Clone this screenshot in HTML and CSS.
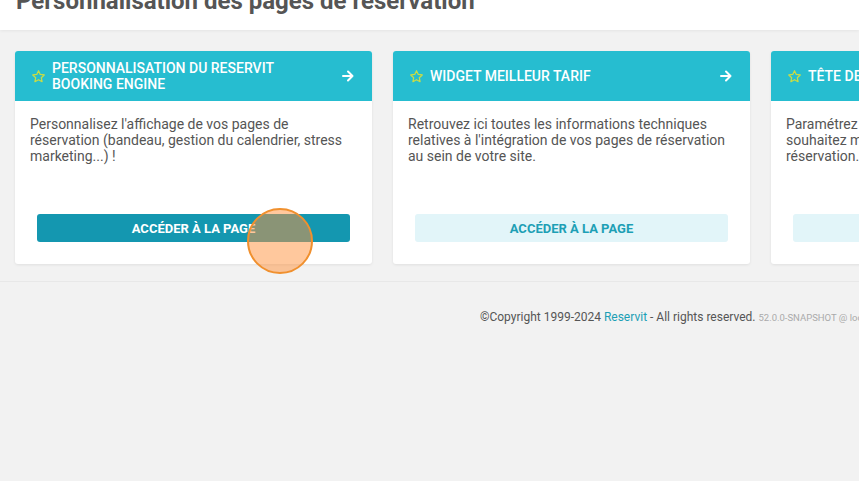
FILE: index.html
```html
<!DOCTYPE html>
<html lang="fr">
<head>
  <meta charset="UTF-8">
  <meta name="viewport" content="width=device-width, initial-scale=1.0">
  <title>Personnalisation des pages de réservation</title>
  <link rel="stylesheet" href="styles.css">
</head>
<body>

  <div class="page-header">
    <h1>Personnalisation des pages de réservation</h1>
  </div>

  <div class="cards">
    <div class="card">
      <div class="card-head">
        <svg class="star" viewBox="0 0 24 24"><path d="M12 2.8l2.8 5.9 6.4.8-4.7 4.4 1.2 6.4L12 17.2l-5.7 3.1 1.2-6.4-4.7-4.4 6.4-.8z"/></svg>
        <span class="card-title">Personnalisation du Reservit Booking Engine</span>
        <svg class="arrow" viewBox="0 0 12 12"><path d="M1 6h9.5M6 1.5L10.5 6 6 10.5"/></svg>
      </div>
      <div class="card-body">
        <p>Personnalisez l'affichage de vos pages de réservation (bandeau, gestion du calendrier, stress marketing...) !</p>
        <button class="btn btn-dark">Accéder à la page</button>
      </div>
    </div>

    <div class="card">
      <div class="card-head">
        <svg class="star" viewBox="0 0 24 24"><path d="M12 2.8l2.8 5.9 6.4.8-4.7 4.4 1.2 6.4L12 17.2l-5.7 3.1 1.2-6.4-4.7-4.4 6.4-.8z"/></svg>
        <span class="card-title">Widget meilleur tarif</span>
        <svg class="arrow" viewBox="0 0 12 12"><path d="M1 6h9.5M6 1.5L10.5 6 6 10.5"/></svg>
      </div>
      <div class="card-body">
        <p>Retrouvez ici toutes les informations techniques relatives à l'intégration de vos pages de réservation au sein de votre site.</p>
        <button class="btn btn-light">Accéder à la page</button>
      </div>
    </div>

    <div class="card">
      <div class="card-head">
        <svg class="star" viewBox="0 0 24 24"><path d="M12 2.8l2.8 5.9 6.4.8-4.7 4.4 1.2 6.4L12 17.2l-5.7 3.1 1.2-6.4-4.7-4.4 6.4-.8z"/></svg>
        <span class="card-title">Tête de page</span>
        <svg class="arrow" viewBox="0 0 12 12"><path d="M1 6h9.5M6 1.5L10.5 6 6 10.5"/></svg>
      </div>
      <div class="card-body">
        <p>Paramétrez ici toutes les informations que vous souhaitez mettre en avant en tête de vos pages de réservation.</p>
        <button class="btn btn-light">Accéder à la page</button>
      </div>
    </div>
  </div>

  <div class="footer">
    ©Copyright 1999-2024 <a href="#">Reservit</a> - All rights reserved.
    <span class="version">52.0.0-SNAPSHOT @ localhost</span>
  </div>

  <!-- click marker -->
  <div class="click-dot"></div>

</body>
</html>
```

FILE: styles.css
```css
body {
  margin: 0;
  padding: 0;
  background-color: #f2f2f2;
  font-family: Roboto, "Liberation Sans", Arial, sans-serif;
  color: #555;
  height: 100vh;
  overflow: hidden;
  position: relative;
}

.page-header {
  background: #fff;
  margin-top: -23px;
  padding: 10px 16px 15px;
  box-shadow: 0 1px 3px rgba(0, 0, 0, 0.06);
}

.page-header h1 {
  margin: 0;
  font-size: 24px;
  line-height: 28px;
  font-weight: 700;
  color: #555;
  white-space: nowrap;
}

.cards {
  display: flex;
  gap: 21px;
  padding: 21px 15px 0;
}

.card {
  flex: 0 0 357px;
  height: 213px;
  background: #fff;
  border-radius: 3px;
  box-shadow: 0 1px 3px rgba(0, 0, 0, 0.08);
  display: flex;
  flex-direction: column;
  overflow: hidden;
}

.card-head {
  height: 50px;
  background: #26bdd0;
  color: #fff;
  display: flex;
  align-items: center;
  padding: 0 18px 0 16px;
}

.star {
  width: 15px;
  height: 15px;
  flex: 0 0 15px;
  fill: none;
  stroke: #c9dc45;
  stroke-width: 2;
  stroke-linejoin: round;
  margin-right: 6px;
}

.card-title {
  flex: 1;
  font-size: 14px;
  line-height: 16px;
  font-weight: 500;
  text-transform: uppercase;
  padding-right: 30px;
  white-space: normal;
}

.arrow {
  width: 12px;
  height: 12px;
  flex: 0 0 12px;
  fill: none;
  stroke: #fff;
  stroke-width: 2;
  stroke-linecap: round;
  stroke-linejoin: round;
}

.card-body {
  flex: 1;
  display: flex;
  flex-direction: column;
  padding: 15px 15px 22px;
}

.card-body p {
  margin: 0;
  font-size: 14px;
  line-height: 16px;
  color: #555;
}

.btn {
  margin: auto 7px 0;
  height: 28px;
  border: none;
  border-radius: 3px;
  font-family: inherit;
  font-size: 13px;
  font-weight: 700;
  text-transform: uppercase;
  cursor: pointer;
}

.btn-dark {
  background: #1497b0;
  color: #fff;
}

.btn-light {
  background: #e2f5f9;
  color: #1d9fb5;
}

.footer {
  margin-top: 17px;
  border-top: 1px solid #e8e8e8;
  padding: 28px 0 0 480px;
  font-size: 12px;
  white-space: nowrap;
  color: #555;
}

.footer a {
  color: #1d9fb5;
  text-decoration: none;
}

.version {
  font-size: 9.5px;
  color: #aaa;
}

.click-dot {
  position: absolute;
  left: 247px;
  top: 208px;
  width: 62px;
  height: 62px;
  border: 2px solid #f0902e;
  border-radius: 50%;
  background: rgba(255, 145, 60, 0.5);
}
```
